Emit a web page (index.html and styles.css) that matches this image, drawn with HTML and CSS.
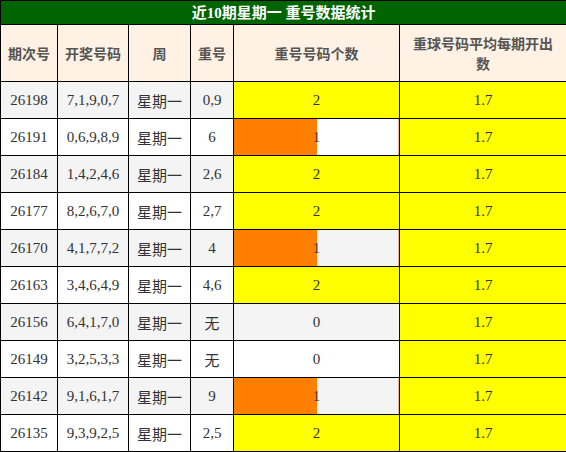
FILE: index.html
```html
<!DOCTYPE html>
<html>
<head>
<meta charset="utf-8">
<link rel="stylesheet" href="styles.css">
</head>
<body>
<table class="stats">
  <colgroup>
    <col class="c-issue"><col class="c-draw"><col class="c-week"><col class="c-rep"><col class="c-count"><col class="c-avg">
  </colgroup>
  <tr class="title-row"><td colspan="6">近10期星期一 重号数据统计</td></tr>
  <tr class="head-row">
    <td>期次号</td><td>开奖号码</td><td>周</td><td>重号</td><td>重号号码个数</td><td class="wrap">重球号码平均每期开出数</td>
  </tr>
  <tr class="odd"><td>26198</td><td>7,1,9,0,7</td><td>星期一</td><td>0,9</td><td class="hi">2</td><td class="hi">1.7</td></tr>
  <tr class="even"><td>26191</td><td>0,6,9,8,9</td><td>星期一</td><td>6</td><td class="barcell"><div class="bar" style="width:50%"></div><span class="val">1</span></td><td class="hi">1.7</td></tr>
  <tr class="odd"><td>26184</td><td>1,4,2,4,6</td><td>星期一</td><td>2,6</td><td class="hi">2</td><td class="hi">1.7</td></tr>
  <tr class="even"><td>26177</td><td>8,2,6,7,0</td><td>星期一</td><td>2,7</td><td class="hi">2</td><td class="hi">1.7</td></tr>
  <tr class="odd"><td>26170</td><td>4,1,7,7,2</td><td>星期一</td><td>4</td><td class="barcell"><div class="bar" style="width:50%"></div><span class="val">1</span></td><td class="hi">1.7</td></tr>
  <tr class="even"><td>26163</td><td>3,4,6,4,9</td><td>星期一</td><td>4,6</td><td class="hi">2</td><td class="hi">1.7</td></tr>
  <tr class="odd"><td>26156</td><td>6,4,1,7,0</td><td>星期一</td><td>无</td><td>0</td><td class="hi">1.7</td></tr>
  <tr class="even"><td>26149</td><td>3,2,5,3,3</td><td>星期一</td><td>无</td><td>0</td><td class="hi">1.7</td></tr>
  <tr class="odd"><td>26142</td><td>9,1,6,1,7</td><td>星期一</td><td>9</td><td class="barcell"><div class="bar" style="width:50%"></div><span class="val">1</span></td><td class="hi">1.7</td></tr>
  <tr class="even"><td>26135</td><td>9,3,9,2,5</td><td>星期一</td><td>2,5</td><td class="hi">2</td><td class="hi">1.7</td></tr>
</table>
</body>
</html>
```
FILE: styles.css
```css
html, body {
  margin: 0;
  padding: 0;
  background: #ffffff;
}

.stats {
  width: 566px;
  border-collapse: collapse;
  table-layout: fixed;
  font-family: "Liberation Serif", "Noto Sans CJK SC", serif;
  font-size: 15px;
  color: #333333;
}

.c-issue { width: 57px; }
.c-draw { width: 71px; }
.c-week { width: 62px; }
.c-rep { width: 43px; }
.c-count { width: 166px; }
.c-avg { width: 167px; }

.stats td {
  border: 1px solid #000000;
  padding: 0;
  text-align: center;
  vertical-align: middle;
}

.title-row td {
  height: 23px;
  background: #006400;
  color: #ffffff;
  font-weight: bold;
  font-size: 15px;
  line-height: 20px;
}

.head-row td {
  height: 56px;
  background: #fff1e4;
  color: #555555;
  font-weight: bold;
  font-size: 14px;
  line-height: 20px;
  font-family: "Noto Sans CJK SC", "Liberation Sans", sans-serif;
}

.head-row td.wrap {
  padding: 0 10px;
}

.odd td, .even td {
  height: 36px;
}

.odd td { background: #f4f4f4; }
.even td { background: #ffffff; }

.stats td.hi { background: #ffff00; }

.stats td.barcell {
  position: relative;
}

.bar {
  position: absolute;
  left: 0;
  top: 0;
  bottom: 0;
  background: #ff8000;
}

.barcell::after {
  content: "";
  position: absolute;
  right: 0;
  top: 0;
  bottom: 0;
  width: 1px;
  background: #f5b48c;
}

.val {
  position: relative;
}
```
